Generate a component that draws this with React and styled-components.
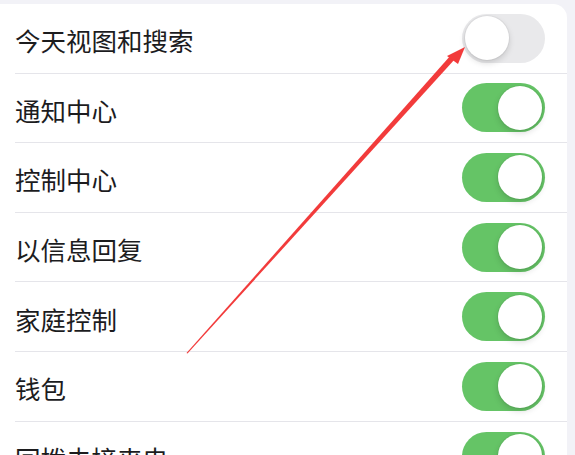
import React from "react";
import styled, { createGlobalStyle } from "styled-components";

const Global = createGlobalStyle`
  html, body { margin: 0; padding: 0; background: #f2f2f7; overflow: hidden; }
  body { font-family: "Noto Sans CJK SC", "Noto Sans", sans-serif; }
`;

const Page = styled.div`
  position: relative;
  width: 575px;
  height: 455px;
  padding-top: 4px;
  box-sizing: border-box;
  overflow: hidden;
`;

const Card = styled.div`
  width: 567px;
  background: #fff;
  border-radius: 0 14px 0 0;
`;

const Row = styled.div`
  height: 69.6px;
  box-sizing: border-box;
  display: flex;
  align-items: center;
  padding-left: 15px;
`;

const RowInner = styled.div`
  flex: 1;
  height: 100%;
  display: flex;
  align-items: center;
  justify-content: space-between;
  padding-right: 22px;
  border-bottom: ${(p) => (p.$last ? "none" : "1px solid #e5e5ea")};
  box-sizing: border-box;
`;

const Label = styled.span`
  font-size: 25.5px;
  color: #1c1c1e;
  padding-top: 3px;
`;

const Track = styled.div`
  width: 83px;
  height: 49px;
  border-radius: 25px;
  background: ${(p) => (p.$on ? "#65c466" : "#e9e9eb")};
  position: relative;
  flex-shrink: 0;
`;

const Thumb = styled.div`
  position: absolute;
  top: 2.5px;
  left: ${(p) => (p.$on ? "36px" : "2.5px")};
  width: 44px;
  height: 44px;
  border-radius: 50%;
  background: #fff;
  box-shadow: 0 3px 6px rgba(0, 0, 0, 0.15), 0 0 0 1px rgba(0, 0, 0, 0.04);
`;

const Overlay = styled.svg`
  position: absolute;
  left: 0;
  top: 0;
  pointer-events: none;
`;

const items = [
  ["今天视图和搜索", false],
  ["通知中心", true],
  ["控制中心", true],
  ["以信息回复", true],
  ["家庭控制", true],
  ["钱包", true],
  ["回拨未接来电", true],
];

export default function App() {
  return (
    <>
      <Global />
      <Page>
        <Card>
          {items.map(([label, on], i) => (
            <Row key={label}>
              <RowInner $last={i === items.length - 1}>
                <Label>{label}</Label>
                <Track $on={on}>
                  <Thumb $on={on} />
                </Track>
              </RowInner>
            </Row>
          ))}
        </Card>
        <Overlay width="575" height="455" viewBox="0 0 575 455">
          <polygon
            points="186.5,353 187.5,353.6 455,59 451,55"
            fill="#f23b3b"
          />
          <polygon points="465,47 447,56 458,64" fill="#f23b3b" />
        </Overlay>
      </Page>
    </>
  );
}
